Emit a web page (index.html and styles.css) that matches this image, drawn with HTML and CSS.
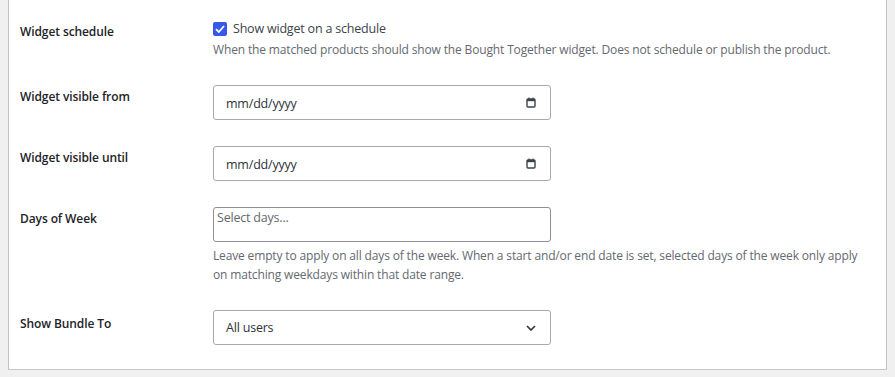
FILE: index.html
```html
<!DOCTYPE html>
<html lang="en">
<head>
    <meta charset="UTF-8">
    <title>Widget schedule</title>
    <link rel="stylesheet" href="styles.css">
</head>
<body>
    <div class="panel">
        <div class="form">
            <div class="row row-schedule">
                <div class="label">Widget schedule</div>
                <div class="field">
                    <label class="check">
                        <span class="box">
                            <svg width="10" height="8" viewBox="0 0 10 8"><path d="M1 4.2 L3.8 7 L9 1" fill="none" stroke="#fff" stroke-width="1.8"/></svg>
                        </span>
                        Show widget on a schedule
                    </label>
                    <p class="desc">When the matched products should show the Bought Together widget. Does not schedule or publish the product.</p>
                </div>
            </div>
            <div class="row row-date">
                <div class="label">Widget visible from</div>
                <div class="field">
                    <div class="input date">
                        <span>mm/dd/yyyy</span>
                        <svg width="10" height="11" viewBox="0 0 10 11"><rect x="1" y="2" width="8" height="8" rx="1" fill="none" stroke="#3c434a" stroke-width="1.4"/><rect x="1" y="2" width="8" height="2.2" fill="#3c434a"/><path d="M3 0.5v2M7 0.5v2" stroke="#3c434a" stroke-width="1.2"/></svg>
                    </div>
                </div>
            </div>
            <div class="row row-date">
                <div class="label">Widget visible until</div>
                <div class="field">
                    <div class="input date">
                        <span>mm/dd/yyyy</span>
                        <svg width="10" height="11" viewBox="0 0 10 11"><rect x="1" y="2" width="8" height="8" rx="1" fill="none" stroke="#3c434a" stroke-width="1.4"/><rect x="1" y="2" width="8" height="2.2" fill="#3c434a"/><path d="M3 0.5v2M7 0.5v2" stroke="#3c434a" stroke-width="1.2"/></svg>
                    </div>
                </div>
            </div>
            <div class="row row-days">
                <div class="label">Days of Week</div>
                <div class="field">
                    <div class="input days">Select days...</div>
                    <p class="desc">Leave empty to apply on all days of the week. When a start and/or end date is set, selected days of the week only apply on matching weekdays within that date range.</p>
                </div>
            </div>
            <div class="row row-select">
                <div class="label">Show Bundle To</div>
                <div class="field">
                    <div class="input select">
                        <span>All users</span>
                        <svg width="10" height="6" viewBox="0 0 10 6"><path d="M1 1 L5 5 L9 1" fill="none" stroke="#2c3338" stroke-width="1.6"/></svg>
                    </div>
                </div>
            </div>
        </div>
    </div>
</body>
</html>
```

FILE: styles.css
```css
body {
    margin: 0;
    padding: 0 8px 7px 8px;
    background-color: #f0f0f1;
    font-family: "Open Sans", "Noto Sans", sans-serif;
    font-size: 12px;
    color: #1d2327;
}
.panel {
    background-color: #fff;
    border: 1px solid #c3c4c7;
    border-top: none;
    padding: 19px 11px 24px 11px;
}
.form {
    display: flex;
    flex-direction: column;
    gap: 26px;
}
.row {
    display: grid;
    grid-template-columns: 193px 1fr;
}
.label {
    font-weight: 600;
    line-height: 20px;
    letter-spacing: -0.1px;
}
.row-schedule .label {
    margin-top: 3px;
}
.row-date .label {
    margin-top: 2px;
}
.row-days .label {
    margin-top: 2px;
}
.row-select .label {
    margin-top: 4px;
}
.check {
    display: flex;
    align-items: center;
    gap: 6px;
    line-height: 20px;
    color: #3c434a;
    font-size: 12.5px;
    letter-spacing: -0.2px;
}
.box {
    width: 14px;
    height: 14px;
    border-radius: 2px;
    background-color: #3858e9;
    display: flex;
    justify-content: center;
    align-items: center;
}
.desc {
    margin: 1px 0 0 0;
    max-width: 655px;
    line-height: 19px;
    color: #646970;
    letter-spacing: -0.15px;
}
.row-days .desc {
    margin-top: 4px;
}
.input {
    width: 338px;
    height: 35px;
    box-sizing: border-box;
    border: 1px solid #8c8f94;
    border-radius: 3px;
    color: #2c3338;
    font-size: 12.5px;
    letter-spacing: -0.2px;
}
.date, .select {
    display: flex;
    align-items: center;
    justify-content: space-between;
    padding: 0 14px 0 12px;
    border-color: #a7aaad;
}
.date span {
    margin-top: 1px;
}
.days {
    padding: 1px 3px;
    line-height: 18px;
    color: #646970;
}
```
